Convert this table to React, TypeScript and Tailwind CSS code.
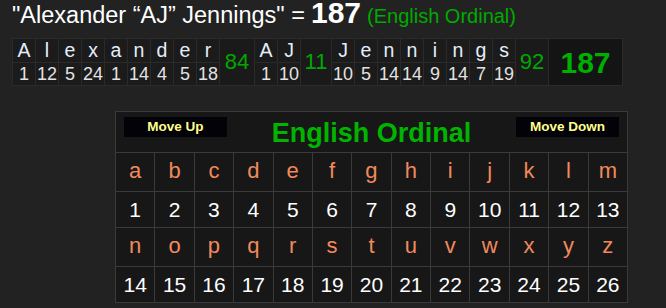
const FONT = { fontFamily: '"Liberation Sans", Arial, sans-serif' };

type Word = { letters: { ch: string; val: number }[]; sum: number; sumWidth: string };

const ordinal = (ch: string) => ch.toLowerCase().charCodeAt(0) - 96;

const makeWord = (w: string, sumWidth: string): Word => {
  const letters = w.split("").map((ch) => ({ ch, val: ordinal(ch) }));
  return { letters, sum: letters.reduce((s, l) => s + l.val, 0), sumWidth };
};

const WORDS: Word[] = [
  makeWord("Alexander", "w-[35px]"),
  makeWord("AJ", "w-[31px]"),
  makeWord("Jennings", "w-[33px]"),
];

const ALPHABET = "abcdefghijklmnopqrstuvwxyz".split("");

function Breakdown() {
  return (
    <div className="flex w-fit border-t border-l border-[#2a2a2a] bg-[#1b1b1b]">
      {WORDS.map((word, wi) => (
        <div key={wi} className="flex">
          {word.letters.map((l, li) => (
            <div key={li} className="flex w-[23px] flex-col">
              <div className="flex h-[24px] items-center justify-center border-r border-b border-[#2a2a2a] text-[19.5px] leading-none text-[#e4eefa]">
                {l.ch}
              </div>
              <div className="flex h-[23px] items-center justify-center border-r border-b border-[#2a2a2a] text-[18px] leading-none text-[#e2e2e2]">
                {l.val}
              </div>
            </div>
          ))}
          <div
            className={`${word.sumWidth} flex h-[47px] items-center justify-center border-r border-b border-[#2a2a2a] bg-[#1a1a1a] text-[22px] leading-none text-[#00a800]`}
          >
            {word.sum}
          </div>
        </div>
      ))}
      <div className="flex h-[47px] w-[74px] items-center justify-center border-r border-b border-[#2a2a2a] bg-[#141414] pt-[1px] text-[30px] font-bold leading-none text-[#00b000]">
        187
      </div>
    </div>
  );
}

function CipherPanel() {
  const rows = [ALPHABET.slice(0, 13), ALPHABET.slice(13)];
  return (
    <div className="ml-[115px] w-[513px] border border-[#3a3a3a] bg-[#171717]">
      <div className="flex h-[40px] items-start justify-between px-[8px] pt-[5px]">
        <button
          type="button"
          className="flex h-[20px] w-[103px] items-center justify-center bg-[#020208] text-[13.5px] font-bold text-[#ffff8a]"
        >
          Move Up
        </button>
        <div className="text-[27px] font-bold leading-[32px] text-[#00b400]">
          English Ordinal
        </div>
        <button
          type="button"
          className="flex h-[20px] w-[103px] items-center justify-center bg-[#020208] text-[13.5px] font-bold text-[#ffff8a]"
        >
          Move Down
        </button>
      </div>
      <div className="grid grid-cols-[repeat(13,1fr)] gap-px border-t border-[#3a3a3a] bg-[#3a3a3a]">
        {rows.map((row, ri) => (
          <div key={ri} className="contents">
            {row.map((ch) => (
              <div
                key={ch}
                className="flex h-[38px] items-center justify-center bg-[#171717] pb-[2px] text-[22px] leading-none text-[#f2895c]"
              >
                {ch}
              </div>
            ))}
            {row.map((ch) => (
              <div
                key={ch + "n"}
                className="flex h-[35px] items-center justify-center bg-[#171717] text-[21px] leading-none text-white"
              >
                {ordinal(ch)}
              </div>
            ))}
          </div>
        ))}
      </div>
    </div>
  );
}

export default function App() {
  return (
    <div className="h-[308px] w-[666px] overflow-hidden bg-[#222222]" style={FONT}>
      <div className="flex h-[27px] items-start pl-[12px]">
        <div className="-mt-[2px] flex items-baseline">
          <span className="text-[23.5px] leading-[27px] text-white">
            "Alexander “AJ” Jennings" ={" "}
          </span>
          <span className="ml-[6px] text-[30px] font-bold leading-[30px] text-white">187</span>
          <span className="ml-[6px] text-[20px] leading-[23px] text-[#00aa00]">
            (English Ordinal)
          </span>
        </div>
      </div>
      <div className="mt-[11px] pl-[12px]">
        <Breakdown />
      </div>
      <div className="mt-[25px]">
        <CipherPanel />
      </div>
    </div>
  );
}
